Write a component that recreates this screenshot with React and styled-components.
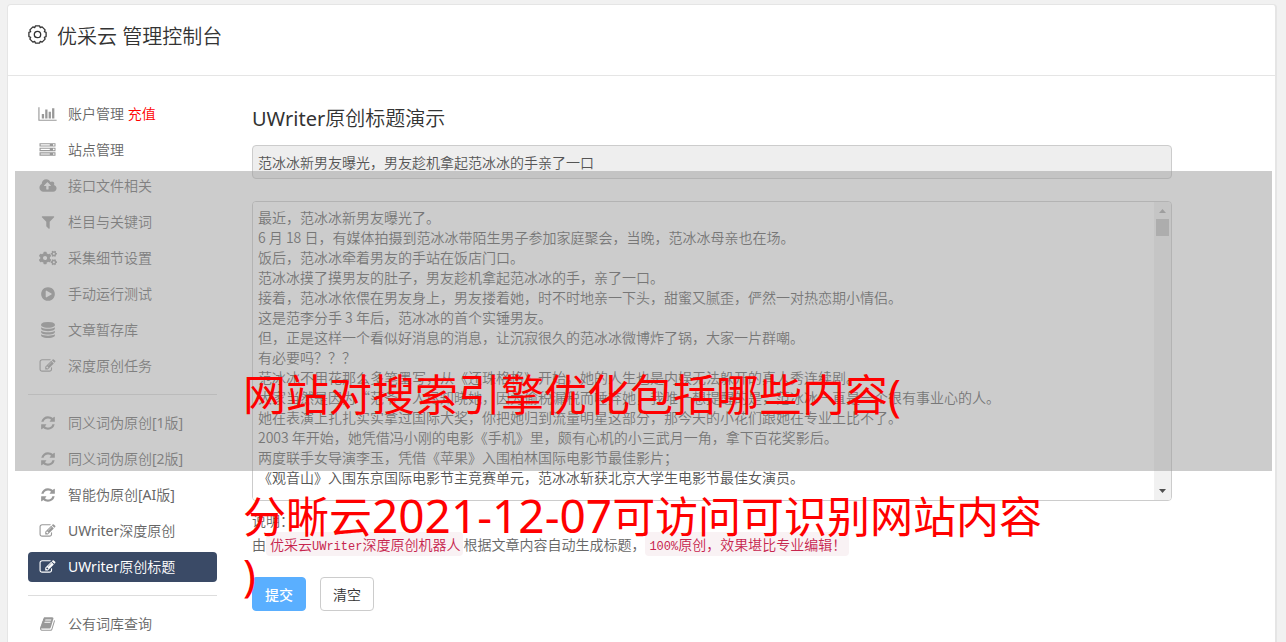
import React, { useState } from "react";
import styled, { createGlobalStyle } from "styled-components";
import { FaCogs } from "react-icons/fa";

const GlobalStyle = createGlobalStyle`
  * {
    box-sizing: border-box;
  }

  body {
    margin: 0;
    background: #f1f1f1;
    color: #666;
    font-family: "Noto Sans", "Noto Sans CJK SC DemiLight", "Noto Sans CJK SC", sans-serif;
    font-size: 14px;
    font-weight: 400;
    text-spacing-trim: space-all;
  }
`;

const Page = styled.div`
  position: relative;
  display: flex;
  min-height: 100vh;
  padding: 4px 9px 0 7px;
`;

const Card = styled.div`
  flex: 1;
  min-width: 0;
  background: #fff;
  border: 1px solid #e5e5e5;
  border-right-width: 2px;
  border-bottom: none;
  border-radius: 4px 4px 0 0;
`;

const Header = styled.header`
  display: flex;
  align-items: flex-start;
  gap: 10px;
  padding: 17px 20px 23px;
  border-bottom: 1px solid #e5e5e5;
`;

const HeaderIcon = styled.svg`
  width: 19px;
  height: 26px;
`;

const HeaderTitle = styled.h1`
  margin: 0;
  color: #333;
  font-size: 20px;
  font-weight: 400;
  line-height: 30px;
`;

const Content = styled.div`
  display: flex;
  gap: 35px;
  padding: 0 20px;
`;

const Sidebar = styled.nav`
  flex: 0 0 189px;
  display: flex;
  flex-direction: column;
  gap: 6px;
  padding-top: 23px;
`;

const MenuLink = styled.a`
  display: flex;
  align-items: center;
  gap: 11px;
  height: 30px;
  padding: 0 10px;
  border-radius: 4px;
  background: ${(props) => (props.$active ? "#3a4a66" : "transparent")};
  color: ${(props) => (props.$active ? "#fff" : "#666")};
  text-decoration: none;
  white-space: nowrap;
`;

const MenuIcon = styled.span`
  display: flex;
  justify-content: center;
  width: 19px;
  color: ${(props) => (props.$active ? "#fff" : "#999")};
`;

const MenuLabel = styled.span`
  padding-bottom: 2px;
`;

const Recharge = styled.span`
  color: #f00;
`;

const Divider = styled.hr`
  width: 100%;
  height: 1px;
  margin: 7px 0;
  border: none;
  background: #ddd;
`;

const Main = styled.main`
  flex: 1;
  min-width: 0;
  padding: 31px 83px 31px 0;
`;

const Title = styled.h2`
  margin: 0 0 14px;
  color: #333;
  font-size: 20px;
  font-weight: 400;
  line-height: 24px;
`;

const TitleInput = styled.input`
  display: block;
  width: 100%;
  height: 34px;
  margin-bottom: 22px;
  padding: 0 5px;
  border: 1px solid #ccc;
  border-radius: 4px;
  background: #eee;
  color: #555;
  font: inherit;
`;

const Editor = styled.div`
  display: flex;
  height: 300px;
  border: 1px solid #ccc;
  border-radius: 4px;
  overflow: hidden;
`;

const ArticleText = styled.textarea`
  flex: 1;
  min-width: 0;
  padding: 5px;
  border: none;
  outline: none;
  resize: none;
  background: #fff;
  color: #555;
  font-family: "Noto Sans CJK SC", sans-serif;
  font-size: 14px;
  font-weight: 350;
  line-height: 20px;
  scrollbar-width: none;
`;

const Scrollbar = styled.div`
  flex: 0 0 17px;
  display: flex;
  flex-direction: column;
  align-items: center;
  background: #f1f1f1;
`;

const ScrollArrow = styled.svg`
  width: 17px;
  height: 17px;
  fill: ${(props) => (props.$muted ? "#a3a3a3" : "#505050")};
`;

const ScrollThumb = styled.div`
  width: 13px;
  height: 17px;
  margin-bottom: auto;
  background: #c1c1c1;
`;

const Hint = styled.p`
  margin: 8px 0 20px;
  line-height: 24px;
`;

const Code = styled.code`
  padding: 2px 3px 2px 4px;
  border-radius: 4px;
  background: #f9f2f4;
  color: #c7254e;
  font-family: "Noto Sans CJK SC", sans-serif;
  font-size: 14px;
  font-weight: 350;
  line-height: 14px;
`;

const Mono = styled.span`
  font-family: "Liberation Mono", monospace;
  font-size: 12px;
`;

const Actions = styled.div`
  display: flex;
  gap: 14px;
`;

const Button = styled.button`
  height: 34px;
  padding: 0 12px;
  border: 1px solid ${(props) => (props.$primary ? "#5aafff" : "#ccc")};
  border-radius: 4px;
  background: ${(props) => (props.$primary ? "#5aafff" : "#fff")};
  color: ${(props) => (props.$primary ? "#fff" : "#333")};
  font-family: "Noto Sans CJK SC", sans-serif;
  font-size: 14px;
  font-weight: ${(props) => (props.$primary ? 500 : 350)};
`;

const Banner = styled.div`
  position: absolute;
  top: 171px;
  left: 15px;
  right: 14px;
  height: 300px;
  padding: 194px 0 0 228px;
  background: rgba(153, 153, 153, 0.5);
  color: #f00;
  font-family: "Noto Sans", "Noto Sans CJK SC", sans-serif;
  font-size: 43px;
  line-height: 60px;
  white-space: nowrap;
  pointer-events: none;
`;

const BannerLine = styled.div`
  height: 60px;
`;

const BannerDate = styled.span`
  font-size: 46px;
`;

const paths = {
  chart: {
    box: "0 0 2048 1792",
    width: 19,
    d: "M640 896v512h-256v-512h256zm384-512v1024h-256v-1024h256zm1024 1152v128h-2048v-1536h128v1408h1920zm-640-896v768h-256v-768h256zm384-384v1152h-256v-1152h256z",
  },
  server: {
    box: "0 0 1792 1792",
    width: 17,
    d: "M128 1408h1024v-128h-1024v128zm0-512h1024v-128h-1024v128zm1568 448q0-40-28-68t-68-28-68 28-28 68 28 68 68 28 68-28 28-68zm-1568-960h1024v-128h-1024v128zm1568 448q0-40-28-68t-68-28-68 28-28 68 28 68 68 28 68-28 28-68zm0-512q0-40-28-68t-68-28-68 28-28 68 28 68 68 28 68-28 28-68zm96 832v384h-1792v-384h1792zm0-512v384h-1792v-384h1792zm0-512v384h-1792v-384h1792z",
  },
  cloud: {
    box: "0 0 1920 1792",
    width: 18,
    d: "M1280 864q0-14-9-23l-352-352q-9-9-23-9t-23 9l-351 351q-10 12-10 24 0 14 9 23t23 9h224v352q0 13 9.5 22.5t22.5 9.5h192q13 0 22.5-9.5t9.5-22.5v-352h224q13 0 22.5-9.5t9.5-22.5zm640 288q0 159-112.5 271.5t-271.5 112.5h-1088q-185 0-316.5-131.5t-131.5-316.5q0-130 70-240t188-165q-2-30-2-43 0-212 150-362t362-150q156 0 285.5 87t188.5 231q71-62 166-62 106 0 181 75t75 181q0 76-41 138 130 31 213.5 135.5t83.5 238.5z",
  },
  filter: {
    box: "-192 0 1792 1792",
    width: 16,
    d: "M1403 295q17 41-14 70l-493 493v742q0 42-39 59-13 5-25 5-27 0-45-19l-256-256q-19-19-19-45v-486l-493-493q-31-29-14-70 17-39 59-39h1280q42 0 59 39z",
  },
  play: {
    box: "-128 0 1792 1792",
    width: 16,
    d: "M768 128q209 0 385.5 103t279.5 279.5 103 385.5-103 385.5-279.5 279.5-385.5 103-385.5-103-279.5-279.5-103-385.5 103-385.5 279.5-279.5 385.5-103zm384 823q32-18 32-55t-32-55l-544-320q-31-19-64-1-32 19-32 56v640q0 37 32 56 16 8 32 8 17 0 32-9z",
  },
  database: {
    box: "-128 0 1792 1792",
    width: 16,
    d: "M768 768q237 0 443-43t325-127v170q0 69-103 128t-280 93.5-385 34.5-385-34.5-280-93.5-103-128v-170q119 84 325 127t443 43zm0 768q237 0 443-43t325-127v170q0 69-103 128t-280 93.5-385 34.5-385-34.5-280-93.5-103-128v-170q119 84 325 127t443 43zm0-384q237 0 443-43t325-127v170q0 69-103 128t-280 93.5-385 34.5-385-34.5-280-93.5-103-128v-170q119 84 325 127t443 43zm0-1152q208 0 385 34.5t280 93.5 103 128v128q0 69-103 128t-280 93.5-385 34.5-385-34.5-280-93.5-103-128v-128q0-69 103-128t280-93.5 385-34.5z",
  },
  edit: {
    box: "0 0 1792 1792",
    width: 17,
    d: "M888 1184l116-116-152-152-116 116v56h96v96h56zm440-720q-16-16-33 1l-350 350q-17 17-1 33t33-1l350-350q17-17 1-33zm80 594v190q0 119-84.5 203.5t-203.5 84.5h-832q-119 0-203.5-84.5t-84.5-203.5v-832q0-119 84.5-203.5t203.5-84.5h832q63 0 117 25 15 7 18 23 3 17-9 29l-49 49q-14 14-32 8-23-6-45-6h-832q-66 0-113 47t-47 113v832q0 66 47 113t113 47h832q66 0 113-47t47-113v-126q0-13 9-22l64-64q15-15 35-7t20 29zm-96-738l288 288-672 672h-288v-288zm444 132l-92 92-288-288 92-92q28-28 68-28t68 28l152 152q28 28 28 68t-28 68z",
  },
  refresh: {
    box: "-128 0 1792 1792",
    width: 16,
    d: "M1511 1056q0 5-1 7-64 268-268 434.5t-478 166.5q-146 0-282.5-55t-243.5-157l-129 129q-19 19-45 19t-45-19-19-45v-448q0-26 19-45t45-19h448q26 0 45 19t19 45-19 45l-137 137q71 66 161 102t187 36q134 0 250-65t186-179q11-17 53-117 8-23 30-23h192q13 0 22.5 9.5t9.5 22.5zm25-800v448q0 26-19 45t-45 19h-448q-26 0-45-19t-19-45 19-45l138-138q-148-137-349-137-134 0-250 65t-186 179q-11 17-53 117-8 23-30 23h-199q-13 0-22.5-9.5t-9.5-22.5v-7q65-268 270-434.5t480-166.5q146 0 284 55.5t245 156.5l130-129q19-19 45-19t45 19 19 45z",
  },
  book: {
    box: "0 0 1792 1792",
    width: 16,
    d: "M1639 478q40 57 18 129l-275 906q-19 64-76.5 107.5t-122.5 43.5h-923q-77 0-148.5-53.5t-99.5-131.5q-24-67-2-127 0-4 3-27t4-37q1-8-3-21.5t-3-19.5q2-11 8-21t16.5-23.5 16.5-23.5q23-38 45-91.5t30-91.5q3-10 .5-30t-.5-28q3-11 17-28t17-23q21-36 42-92t25-90q1-9-2.5-32t.5-28q4-13 22-30.5t22-22.5q19-26 42.5-84.5t27.5-96.5q1-8-3-25.5t-2-26.5q2-8 9-18t18-23 17-21q8-12 16.5-30.5t15-35 16-36 19.5-32 26.5-23.5 36-11.5 47.5 5.5l-1 3q38-9 51-9h761q74 0 114 56t18 130l-274 906q-36 119-71.5 153.5t-128.5 34.5h-869q-27 0-38 15-11 16-1 43 24 70 144 70h923q29 0 56-15.5t35-41.5l300-987q7-22 5-57 38 15 59 43zm-1064 2q-4 13 2 22.5t20 9.5h608q13 0 25.5-9.5t16.5-22.5l21-64q4-13-2-22.5t-20-9.5h-608q-13 0-25.5 9.5t-16.5 22.5zm-83 256q-4 13 2 22.5t20 9.5h608q13 0 25.5-9.5t16.5-22.5l21-64q4-13-2-22.5t-20-9.5h-608q-13 0-25.5 9.5t-16.5 22.5z",
  },
};

const menuGroups = [
  [
    { icon: "chart", label: "账户管理", extra: "充值" },
    { icon: "server", label: "站点管理" },
    { icon: "cloud", label: "接口文件相关" },
    { icon: "filter", label: "栏目与关键词" },
    { icon: "cogs", label: "采集细节设置" },
    { icon: "play", label: "手动运行测试" },
    { icon: "database", label: "文章暂存库" },
    { icon: "edit", label: "深度原创任务" },
  ],
  [
    { icon: "refresh", label: "同义词伪原创[1版]" },
    { icon: "refresh", label: "同义词伪原创[2版]" },
    { icon: "refresh", label: "智能伪原创[AI版]" },
    { icon: "edit", label: "UWriter深度原创" },
    { icon: "edit", label: "UWriter原创标题", active: true },
  ],
  [{ icon: "book", label: "公有词库查询" }],
];

const articleLines = [
  "最近，范冰冰新男友曝光了。",
  "6 月 18 日，有媒体拍摄到范冰冰带陌生男子参加家庭聚会，当晚，范冰冰母亲也在场。",
  "饭后，范冰冰牵着男友的手站在饭店门口。",
  "范冰冰摸了摸男友的肚子，男友趁机拿起范冰冰的手，亲了一口。",
  "接着，范冰冰依偎在男友身上，男友搂着她，时不时地亲一下头，甜蜜又腻歪，俨然一对热恋期小情侣。",
  "这是范李分手 3 年后，范冰冰的首个实锤男友。",
  "但，正是这样一个看似好消息的消息，让沉寂很久的范冰冰微博炸了锅，大家一片群嘲。",
  "有必要吗？？？",
  "范冰冰不用花那么多笔墨写，从《还珠格格》开始，她的人生也是内娱无法躲开的真人秀连续剧。",
  "大家当然是因为“范爷”人尽知晓她，因为偷税漏税而唾弃她，我唯一想提醒的是，范冰冰一直是一个很有事业心的人。",
  "她在表演上扎扎实实拿过国际大奖，你把她归到流量明星这部分，那今天的小花们跟她在专业上比不了。",
  "2003 年开始，她凭借冯小刚的电影《手机》里，颇有心机的小三武月一角，拿下百花奖影后。",
  "两度联手女导演李玉，凭借《苹果》入围柏林国际电影节最佳影片；",
  "《观音山》入围东京国际电影节主竞赛单元，范冰冰斩获北京大学生电影节最佳女演员。",
];

const Icon = ({ name }) => {
  if (name === "cogs") {
    return <FaCogs size={18} />;
  }
  const { box, width, d } = paths[name];
  return (
    <svg viewBox={box} width={width} height={16} fill="currentColor" aria-hidden="true">
      <path d={d} />
    </svg>
  );
};

// eight scallops around a small hub
const GearIcon = () => (
  <HeaderIcon viewBox="0.5 1 19 19" fill="none" stroke="#333" strokeWidth="1.3" aria-hidden="true">
    <path
      strokeLinejoin="round"
      d="M7.17 3.16L7.9 1.4H12.1L12.83 3.16L14.6 2.4L17.6 5.4L16.84 7.17L18.6 7.9V12.1L16.84 12.83L17.6 14.6L14.6 17.6L12.83 16.84L12.1 18.6H7.9L7.17 16.84L5.4 17.6L2.4 14.6L3.16 12.83L1.4 12.1V7.9L3.16 7.17L2.4 5.4L5.4 2.4z"
    />
    <circle cx="10" cy="10" r="3.2" />
  </HeaderIcon>
);

const MenuItem = ({ item }) => (
  <MenuLink href="#" $active={item.active}>
    <MenuIcon $active={item.active}>
      <Icon name={item.icon} />
    </MenuIcon>
    <MenuLabel>
      {item.label}
      {item.extra && <Recharge> {item.extra}</Recharge>}
    </MenuLabel>
  </MenuLink>
);

const App = () => {
  const [title, setTitle] = useState("范冰冰新男友曝光，男友趁机拿起范冰冰的手亲了一口");
  const [article, setArticle] = useState(articleLines.join("\n"));

  const handleClear = () => {
    setTitle("");
    setArticle("");
  };

  return (
    <Page lang="zh-CN">
      <GlobalStyle />
      <Card>
        <Header>
          <GearIcon />
          <HeaderTitle>优采云 管理控制台</HeaderTitle>
        </Header>
        <Content>
          <Sidebar>
            {menuGroups.map((group, index) => (
              <React.Fragment key={index}>
                {index > 0 && <Divider />}
                {group.map((item) => (
                  <MenuItem key={item.label} item={item} />
                ))}
              </React.Fragment>
            ))}
          </Sidebar>
          <Main>
            <Title>UWriter原创标题演示</Title>
            <TitleInput aria-label="标题" value={title} readOnly />
            <Editor>
              <ArticleText
                aria-label="文章内容"
                spellCheck={false}
                value={article}
                onChange={(e) => setArticle(e.target.value)}
              />
              <Scrollbar aria-hidden="true">
                <ScrollArrow $muted viewBox="0 0 17 17">
                  <path d="M5 11h7L8.5 7z" />
                </ScrollArrow>
                <ScrollThumb />
                <ScrollArrow viewBox="0 0 17 17">
                  <path d="M5 6h7l-3.5 4z" />
                </ScrollArrow>
              </Scrollbar>
            </Editor>
            <Hint>
              说明：
              <br />由
              <Code>
                优采云<Mono>UWriter</Mono>深度原创机器人
              </Code>
              根据文章内容自动生成标题，
              <Code>
                <Mono>100%</Mono>原创，效果堪比专业编辑！
              </Code>
            </Hint>
            <Actions>
              <Button type="button" $primary>
                提交
              </Button>
              <Button type="button" onClick={handleClear}>
                清空
              </Button>
            </Actions>
          </Main>
        </Content>
      </Card>
      <Banner>
        <BannerLine>网站对搜索引擎优化包括哪些内容(</BannerLine>
        <BannerLine />
        <BannerLine>
          分晰云<BannerDate>2021-12-07</BannerDate>可访问可识别网站内容
        </BannerLine>
        <BannerLine>)</BannerLine>
      </Banner>
    </Page>
  );
};

export default App;
